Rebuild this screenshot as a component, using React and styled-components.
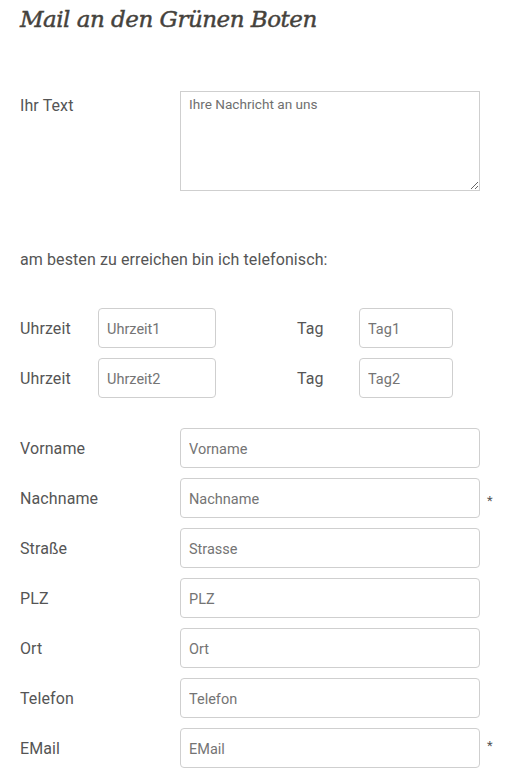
import React from 'react';
import styled, { createGlobalStyle } from 'styled-components';

const GlobalStyle = createGlobalStyle`
  body {
    margin: 0;
    background: #fff;
    font-family: Roboto, "Liberation Sans", sans-serif;
    color: #555;
  }
  * { box-sizing: border-box; }
`;

const Page = styled.div`
  padding: 0 0 20px 20px;
  width: 527px;
`;

const Title = styled.h1`
  margin: 0;
  padding-top: 3px;
  font-family: "DejaVu Serif", "Liberation Serif", serif;
  font-style: italic;
  font-weight: normal;
  font-size: 23px;
  line-height: 32px;
  color: #45423c;
  letter-spacing: -0.5px;
  -webkit-text-stroke: 0.45px #45423c;
`;

const Row = styled.div`
  display: grid;
  grid-template-columns: 160px 300px auto;
  align-items: ${p => (p.$top ? 'start' : 'center')};
  margin-top: ${p => p.$mt || 0}px;
`;

const Label = styled.label`
  font-size: 16px;
  line-height: 20px;
  padding-top: 2px;
  color: #555;
  letter-spacing: 0.1px;
  margin-top: ${p => p.$mt || 0}px;
`;

const TextArea = styled.textarea`
  width: 300px;
  height: 100px;
  border: 1px solid #cfcfcf;
  border-radius: 0;
  padding: 4px 8px;
  font-family: Roboto, "Liberation Sans", sans-serif;
  font-size: 13.6px;
  color: #555;
  &::placeholder { color: #6f6f6f; }
`;

const Note = styled.p`
  margin: 57px 0 0;
  font-size: 16px;
  line-height: 20px;
  padding-top: 2px;
  letter-spacing: 0.1px;
  color: #555;
`;

const TimeGrid = styled.div`
  display: grid;
  grid-template-columns: 78px 118px 81px 62px 94px;
  grid-auto-rows: 40px;
  row-gap: 10px;
  align-items: center;
  margin-top: 38px;
`;

const Input = styled.input`
  width: ${p => p.$w || 300}px;
  height: 40px;
  border: 1px solid #cfcfcf;
  border-radius: 4px;
  padding: 2px 8px 0;
  font-family: Roboto, "Liberation Sans", sans-serif;
  font-size: 14.5px;
  color: #555;
  &::placeholder { color: #747474; }
`;

const Fields = styled.div`
  display: grid;
  row-gap: 10px;
  margin-top: 30px;
`;

const Required = styled.span`
  font-size: 13px;
  color: #555;
  padding-left: 7px;
  margin-top: ${p => p.$mt || 3}px;
`;

const fields = [
  { label: 'Vorname', ph: 'Vorname' },
  { label: 'Nachname', ph: 'Nachname', req: true },
  { label: 'Straße', ph: 'Strasse' },
  { label: 'PLZ', ph: 'PLZ' },
  { label: 'Ort', ph: 'Ort' },
  { label: 'Telefon', ph: 'Telefon' },
  { label: 'EMail', ph: 'EMail', req: true, up: true },
];

export default function App() {
  return (
    <Page>
      <GlobalStyle />
      <Title>Mail an den Grünen Boten</Title>

      <Row $top $mt={56}>
        <Label $mt={3}>Ihr Text</Label>
        <TextArea placeholder="Ihre Nachricht an uns" />
      </Row>

      <Note>am besten zu erreichen bin ich telefonisch:</Note>

      <TimeGrid>
        <Label>Uhrzeit</Label>
        <Input $w={118} placeholder="Uhrzeit1" />
        <span />
        <Label>Tag</Label>
        <Input $w={94} placeholder="Tag1" />
        <Label>Uhrzeit</Label>
        <Input $w={118} placeholder="Uhrzeit2" />
        <span />
        <Label>Tag</Label>
        <Input $w={94} placeholder="Tag2" />
      </TimeGrid>

      <Fields>
        {fields.map(f => (
          <Row key={f.label}>
            <Label>{f.label}</Label>
            <Input placeholder={f.ph} />
            {f.req ? <Required $mt={f.up ? -6 : 4}>*</Required> : <span />}
          </Row>
        ))}
      </Fields>
    </Page>
  );
}
